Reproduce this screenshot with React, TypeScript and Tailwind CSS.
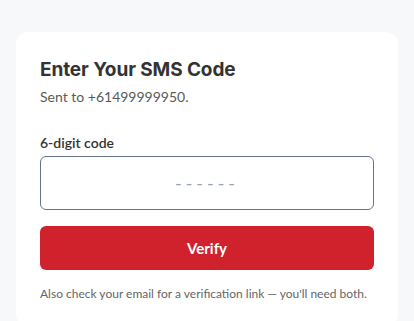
import { useState } from "react"

export default function App() {
    const [code, setCode] = useState("")

    return (
        <div className="min-h-screen bg-[#f7f8fa] px-4 pt-8 font-['Lato',sans-serif]">
            <div className="bg-white rounded-xl px-6 pt-6 pb-6">
                <h1 className="font-['Inter',sans-serif] text-[19px] leading-7 font-bold text-[#333333] tracking-[-0.005em]">Enter Your SMS Code</h1>
                <p className="mt-[3px] text-[14px] leading-5 text-[#5a5a5a]">Sent to +61499999950.</p>

                <label className="block mt-[26px] text-[14px] leading-5 font-semibold text-[#333333]">6-digit code</label>
                <input
                    value={code}
                    onChange={(e) => setCode(e.target.value)}
                    placeholder="------"
                    inputMode="numeric"
                    maxLength={6}
                    className="mt-[3px] w-full h-[54px] rounded-md border border-[#64748b] text-center text-[18px] tracking-[0.22em] text-[#333333] placeholder:text-[#94a3b8] outline-none"
                />

                <button className="mt-4 w-full h-[44px] rounded-md bg-[#d0222d] text-white text-[15px] font-bold">
                    Verify
                </button>

                <p className="mt-4 text-[12px] leading-4 text-[#666666] whitespace-nowrap">
                    Also check your email for a verification link — you'll need both.
                </p>
            </div>
        </div>
    )
}
